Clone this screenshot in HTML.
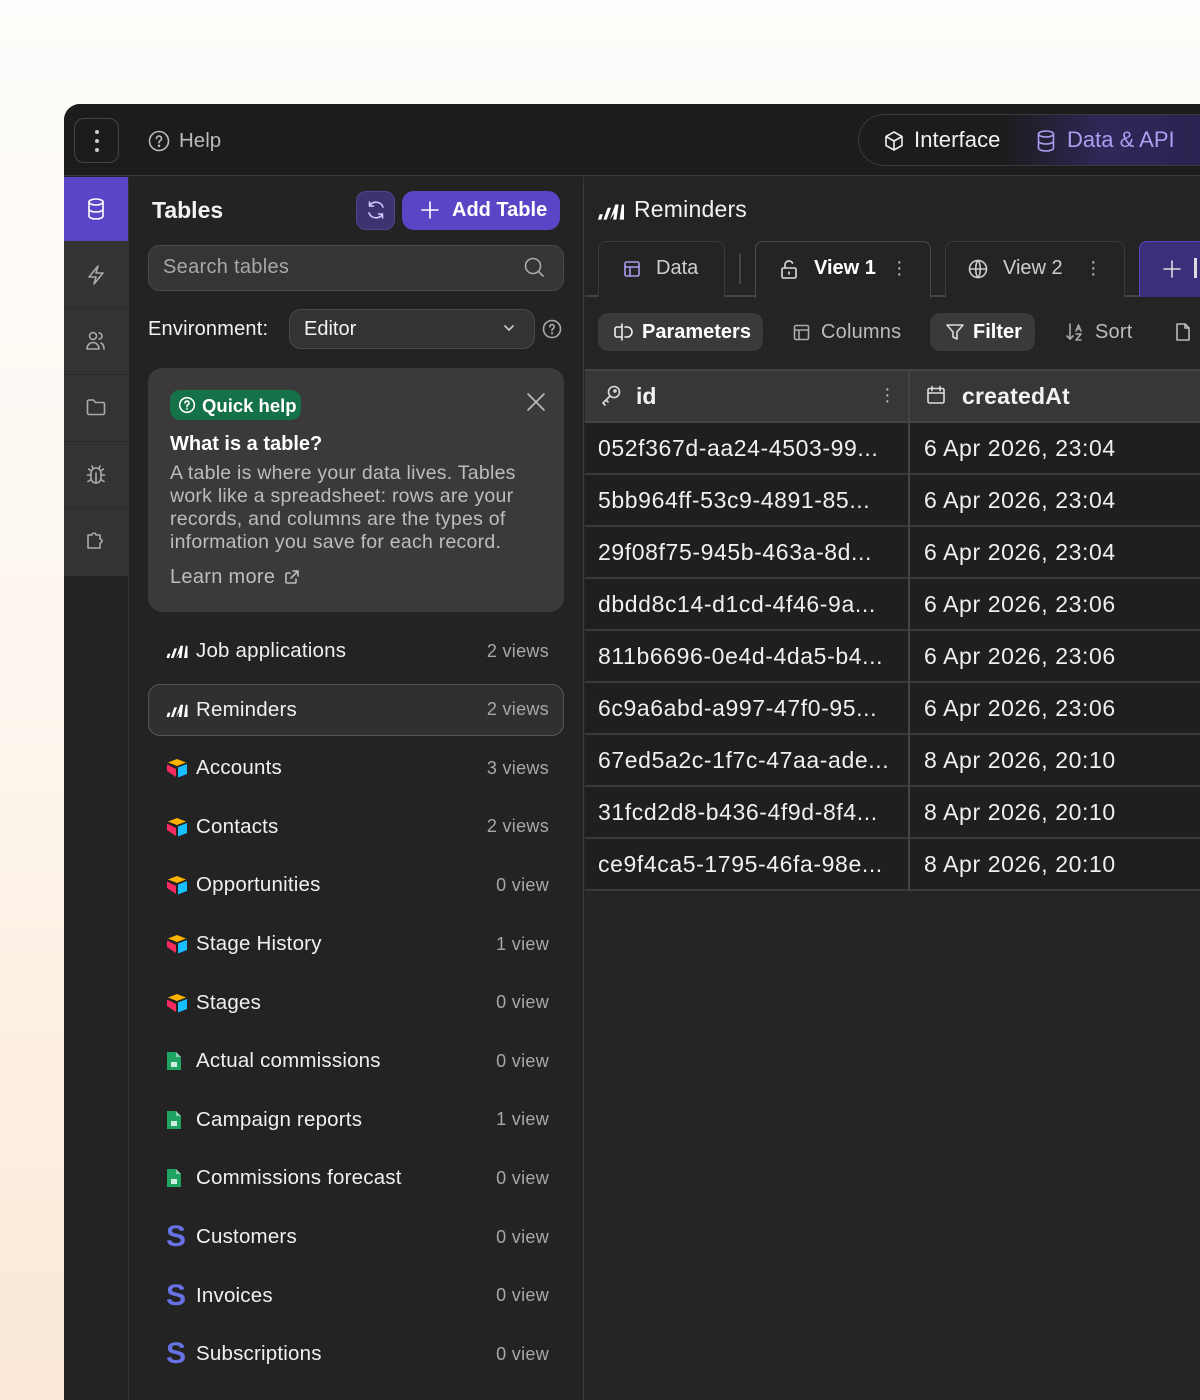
<!DOCTYPE html>
<html style="overflow:hidden;height:1400px"><head><meta charset="utf-8"><style>
*{box-sizing:border-box;margin:0;padding:0}
body{width:1200px;height:1400px;overflow:hidden;font-family:"Liberation Sans",sans-serif;background:linear-gradient(180deg,#fefdfb 0%,#fdf6ee 50%,#fbe8d6 100%);position:relative}
.a{position:absolute}
.win{left:64px;top:104px;width:1136px;height:1296px;background:#242424;border-top-left-radius:16px;overflow:hidden}
svg{fill:none;stroke:currentColor;stroke-width:1.6;stroke-linecap:round;stroke-linejoin:round}
.t{color:#f2f2f2}
.row{left:148px;width:416px;height:52px;display:flex;align-items:center;padding-left:18px;font-size:20.5px;letter-spacing:.2px;color:#f0f0f0}
.row .v{position:absolute;right:15px;color:#a8a8a8;font-size:18px;letter-spacing:.3px}
.row .ic{width:22px;margin-right:8px;display:flex;align-items:center}
.tr{left:521px;width:615px;height:52px;border-bottom:2px solid #3a3a3a;background:#1f1f1f;font-size:23px;letter-spacing:.6px;color:#f0f0f0}
.tr span{position:absolute;top:12px}
</style></head><body>
<div class="a win">
 <div class="a" style="left:0;top:0;width:1136px;height:72px;background:#1c1c1c;border-bottom:1px solid #3a3a3a"></div>
 <div class="a" style="left:10px;top:14px;width:45px;height:45px;border:1.5px solid #444;border-radius:10px;display:flex;flex-direction:column;align-items:center;justify-content:center;gap:5px">
  <i style="width:4px;height:4px;background:#ccc;border-radius:2px"></i><i style="width:4px;height:4px;background:#ccc;border-radius:2px"></i><i style="width:4px;height:4px;background:#ccc;border-radius:2px"></i></div>
 <svg class="a" style="left:84px;top:26px;color:#bbb" width="22" height="22" viewBox="0 0 22 22"><circle cx="11" cy="11" r="9.5"/><path d="M8.5 8.5a2.5 2.5 0 1 1 3.5 2.3c-.6.3-1 .8-1 1.5v.5"/><circle cx="11" cy="15.8" r=".5" fill="#bbb"/></svg>
 <div class="a" style="left:115px;top:25px;font-size:20.5px;color:#bbb">Help</div>
 <div class="a" style="left:794px;top:10px;width:360px;height:52px;border:1.5px solid #3a3a3a;border-right:none;border-radius:26px 0 0 26px;background:linear-gradient(90deg,#1c1c1c 0%,#1c1c1c 40%,#2f2758 68%,#2a2450 100%)"></div>
 <svg class="a" style="left:820px;top:26px;color:#eee" width="20" height="22" viewBox="0 0 20 22"><path d="M10 2l8 4.5v9L10 20l-8-4.5v-9z M2 6.5l8 4.5 8-4.5 M10 11v9"/></svg>
 <div class="a" style="left:850px;top:23px;font-size:22px;letter-spacing:.1px;color:#f2f2f2">Interface</div>
 <svg class="a" style="left:972px;top:25px;color:#a99ff0" width="20" height="24" viewBox="0 0 20 24"><ellipse cx="10" cy="5" rx="7.5" ry="3"/><path d="M2.5 5v14c0 1.7 3.4 3 7.5 3s7.5-1.3 7.5-3V5 M2.5 12c0 1.7 3.4 3 7.5 3s7.5-1.3 7.5-3"/></svg>
 <div class="a" style="left:1003px;top:23px;font-size:22px;color:#a99ff0">Data &amp; API</div>

 <div class="a" style="left:0;top:73px;width:64px;height:400px;background:#333"></div>
 <div class="a" style="left:0;top:472px;width:64px;height:824px;background:#222"></div>
 <div class="a" style="left:0;top:73px;width:64px;height:64px;background:#5b45c6"></div>
 <div class="a" style="left:0;top:204px;width:64px;height:1px;background:#2a2a2a"></div>
 <div class="a" style="left:0;top:270px;width:64px;height:1px;background:#2a2a2a"></div>
 <div class="a" style="left:0;top:337px;width:64px;height:1px;background:#2a2a2a"></div>
 <div class="a" style="left:0;top:404px;width:64px;height:1px;background:#2a2a2a"></div>
 <svg class="a" style="left:23px;top:94px;color:#fff" width="18" height="22" viewBox="0 0 18 22"><ellipse cx="9" cy="4" rx="7" ry="3"/><path d="M2 4v14c0 1.7 3 3 7 3s7-1.3 7-3V4 M2 11c0 1.7 3 3 7 3s7-1.3 7-3"/></svg>
 <svg class="a" style="left:22px;top:160px;color:#aaa" width="20" height="22" viewBox="0 0 20 22"><path d="M12 2L3 13h7l-2 7 9-11h-7z"/></svg>
 <svg class="a" style="left:21px;top:226px;color:#aaa" width="22" height="22" viewBox="0 0 22 22"><circle cx="8" cy="6" r="3.5"/><path d="M2 19c0-4 3-6.5 6-6.5s6 2.5 6 6.5z M14 3a3 3 0 0 1 0 6 M16 13c2 1 3 3 3 6"/></svg>
 <svg class="a" style="left:22px;top:294px;color:#aaa" width="20" height="18" viewBox="0 0 20 18"><path d="M1.5 3.5a1.5 1.5 0 0 1 1.5-1.5h4.5l2 2.5H17a1.5 1.5 0 0 1 1.5 1.5v9a1.5 1.5 0 0 1-1.5 1.5H3A1.5 1.5 0 0 1 1.5 15z"/></svg>
 <svg class="a" style="left:22px;top:360px;color:#aaa" width="20" height="22" viewBox="0 0 20 22"><path d="M5 9a5 5 0 0 1 10 0v5a5 5 0 0 1-10 0z M10 9v10 M5 11H1.5 M15 11h3.5 M5 15.5l-3 2 M15 15.5l3 2 M5.5 7l-3-2 M14.5 7l3-2 M7 4.5L6 2 M13 4.5l1-2.5"/></svg>
 <svg class="a" style="left:22px;top:426px;color:#aaa" width="20" height="20" viewBox="0 0 20 20"><path d="M2 5h4a2 2 0 1 1 4 0h4v4a2 2 0 1 1 0 4v5H2z"/></svg>

 <div class="a" style="left:64px;top:73px;width:456px;height:1223px;background:#232323;border-left:1px solid #303030;border-right:1.5px solid #3a3a3a"></div>
 <div class="a t" style="left:88px;top:93px;font-size:23px;font-weight:bold">Tables</div>
 <div class="a" style="left:292px;top:87px;width:39px;height:39px;border-radius:10px;background:#3c3370;border:1.5px solid #4f4590"></div>
 <svg class="a" style="left:301px;top:95px;color:#cfc9ff" width="22" height="22" viewBox="0 0 22 22"><path d="M18 8A7.5 7.5 0 0 0 4.5 7 M4 14a7.5 7.5 0 0 0 13.5 1 M4.5 3v4h4 M17.5 19v-4h-4"/></svg>
 <div class="a" style="left:338px;top:87px;width:158px;height:39px;border-radius:12px;background:#5b45c6"></div>
 <svg class="a" style="left:356px;top:96px;color:#fff" width="20" height="20" viewBox="0 0 20 20"><path d="M10 2v16 M2 10h16"/></svg>
 <div class="a" style="left:388px;top:95px;font-size:20px;color:#fff;font-weight:bold">Add Table</div>
 <div class="a" style="left:84px;top:141px;width:416px;height:46px;border:1.5px solid #4a4a4a;border-radius:12px;background:#353535"></div>
 <div class="a" style="left:99px;top:152px;font-size:20px;letter-spacing:.3px;color:#a8a8a8">Search tables</div>
 <svg class="a" style="left:459px;top:152px;color:#aaa" width="22" height="22" viewBox="0 0 22 22"><circle cx="10" cy="10" r="7.5"/><path d="M15.5 15.5L20 20"/></svg>
 <div class="a t" style="left:84px;top:214px;font-size:20px;letter-spacing:.2px">Environment:</div>
 <div class="a" style="left:225px;top:205px;width:246px;height:40px;border:1.5px solid #4a4a4a;border-radius:12px;background:#333"></div>
 <div class="a t" style="left:240px;top:214px;font-size:20px">Editor</div>
 <svg class="a" style="left:439px;top:219px;color:#ccc" width="12" height="10" viewBox="0 0 12 10"><path d="M2 3l4 4 4-4"/></svg>
 <svg class="a" style="left:478px;top:215px;color:#aaa" width="20" height="20" viewBox="0 0 20 20"><circle cx="10" cy="10" r="8.5"/><path d="M7.8 7.8a2.2 2.2 0 1 1 3 2c-.5.3-.8.7-.8 1.3v.4"/><circle cx="10" cy="14.2" r=".4"/></svg>

 <div class="a" style="left:84px;top:264px;width:416px;height:244px;background:#3a3a3a;border-radius:14px"></div>
 <div class="a" style="left:106px;top:286px;width:131px;height:30px;border-radius:10px;background:#157148"></div>
 <svg class="a" style="left:114px;top:292px;color:#fff" width="18" height="18" viewBox="0 0 18 18"><circle cx="9" cy="9" r="7.3"/><path d="M7 7a2 2 0 1 1 2.7 1.9c-.4.2-.7.6-.7 1.1v.3"/><circle cx="9" cy="12.6" r=".3"/></svg>
 <div class="a" style="left:138px;top:291px;font-size:18.5px;color:#fff;font-weight:bold">Quick help</div>
 <svg class="a" style="left:462px;top:288px;color:#bbb" width="20" height="20" viewBox="0 0 20 20"><path d="M2 2l16 16 M18 2L2 18"/></svg>
 <div class="a" style="left:106px;top:329px;font-size:20px;color:#fff;font-weight:bold">What is a table?</div>
 <div class="a" style="left:106px;top:358px;width:380px;font-size:19.5px;line-height:23px;letter-spacing:.25px;color:#bdbdbd">A table is where your data lives. Tables work like a spreadsheet: rows are your records, and columns are the types of information you save for each record.</div>
 <div class="a" style="left:106px;top:462px;font-size:20px;letter-spacing:.3px;color:#bdbdbd">Learn more</div>
 <svg class="a" style="left:220px;top:465px;color:#bdbdbd" width="16" height="16" viewBox="0 0 16 16"><path d="M9 2h5v5 M14 2L7 9 M12 10v3a1 1 0 0 1-1 1H3a1 1 0 0 1-1-1V5a1 1 0 0 1 1-1h3"/></svg>

 <div class="a" style="left:84px;top:580px;width:416px;height:52px;border:1.5px solid #555;border-radius:12px;background:#303030"></div>
 <div id="list"></div>

 <div class="a" style="left:534px;top:98px;color:#fff"><svg width="26" height="18" viewBox="0 0 24 16" style="fill:#fff;stroke:none"><path d="M0 16l1.5-5h3l-1.5 5z M5 16l4-11h3l-4 11z M11 16l5-14h3l-2 14h-3l1-6z M20 16l2-14h2v14z"/></svg></div>
 <div class="a t" style="left:570px;top:92px;font-size:23px;letter-spacing:.2px">Reminders</div>
 <div class="a" style="left:521px;top:191px;width:615px;height:1.5px;background:#444"></div>
 <div class="a" style="left:534px;top:137px;width:127px;height:56px;border:1.5px solid #3a3a3a;border-bottom:none;border-radius:8px 8px 0 0;background:#242424"></div>
 <svg class="a" style="left:559px;top:156px;color:#a99ff0" width="18" height="18" viewBox="0 0 18 18"><rect x="2" y="2" width="14" height="14" rx="1.5"/><path d="M2 7h14 M7 7v9"/></svg>
 <div class="a" style="left:592px;top:153px;font-size:20px;color:#cfcfcf">Data</div>
 <div class="a" style="left:675px;top:150px;width:1.5px;height:30px;background:#444"></div>
 <div class="a" style="left:691px;top:137px;width:176px;height:57px;border:1.5px solid #4a4a4a;border-bottom:none;border-radius:8px 8px 0 0;background:#242424"></div>
 <svg class="a" style="left:716px;top:155px;color:#ddd" width="18" height="20" viewBox="0 0 18 20"><rect x="2" y="9" width="14" height="10" rx="1.5"/><path d="M5 9V6a4 4 0 0 1 7.5-2 M9 13v2"/></svg>
 <div class="a" style="left:750px;top:153px;font-size:20px;color:#fff;font-weight:bold">View 1</div>
 <div class="a" style="left:832px;top:155px;font-size:20px;color:#bbb;line-height:6px">·<br>·<br>·</div>
 <div class="a" style="left:881px;top:137px;width:180px;height:56px;border:1.5px solid #3a3a3a;border-bottom:none;border-radius:8px 8px 0 0;background:#242424"></div>
 <svg class="a" style="left:904px;top:155px;color:#ccc" width="20" height="20" viewBox="0 0 20 20"><circle cx="10" cy="10" r="8.5"/><path d="M1.5 10h17 M10 1.5c-3 3-3 14 0 17 M10 1.5c3 3 3 14 0 17"/></svg>
 <div class="a" style="left:939px;top:153px;font-size:20px;color:#cfcfcf">View 2</div>
 <div class="a" style="left:1026px;top:155px;font-size:20px;color:#bbb;line-height:6px">·<br>·<br>·</div>
 <div class="a" style="left:1075px;top:137px;width:61px;height:56px;border:1.5px solid #5b45c6;border-bottom:none;border-right:none;border-radius:8px 0 0 0;background:#3a2f7a"></div>
 <svg class="a" style="left:1098px;top:155px;color:#ddd" width="20" height="20" viewBox="0 0 20 20"><path d="M10 2v16 M2 10h16"/></svg>
 <div class="a" style="left:1130px;top:154px;width:3px;height:20px;background:#ddd"></div>

 <div class="a" style="left:534px;top:209px;width:165px;height:38px;background:#3a3a3a;border-radius:10px"></div>
 <svg class="a" style="left:549px;top:218px;color:#eee" width="20" height="20" viewBox="0 0 20 20"><path d="M9 2v16 M9 5H4a2 2 0 0 0-2 2v6a2 2 0 0 0 2 2h5 M12 5h2a4 4 0 0 1 0 10h-2"/></svg>
 <div class="a" style="left:578px;top:217px;font-size:20px;color:#fff;font-weight:bold">Parameters</div>
 <svg class="a" style="left:729px;top:220px;color:#aaa" width="17" height="17" viewBox="0 0 17 17"><rect x="1.5" y="1.5" width="14" height="14" rx="1.5"/><path d="M1.5 6h14 M6 6v9.5"/></svg>
 <div class="a" style="left:757px;top:217px;font-size:20px;letter-spacing:.2px;color:#bbb">Columns</div>
 <div class="a" style="left:866px;top:209px;width:105px;height:38px;background:#3a3a3a;border-radius:10px"></div>
 <svg class="a" style="left:881px;top:218px;color:#ddd" width="20" height="20" viewBox="0 0 20 20"><path d="M2 3h16l-6 7v7l-4-2v-5z"/></svg>
 <div class="a" style="left:909px;top:217px;font-size:20px;color:#fff;font-weight:bold">Filter</div>
 <svg class="a" style="left:1001px;top:218px;color:#aaa" width="20" height="20" viewBox="0 0 20 20"><path d="M5 2v15 M2 14l3 3 3-3 M11 9l2.5-6 2.5 6 M12 7h3 M11 12h5l-5 6h5"/></svg>
 <div class="a" style="left:1031px;top:217px;font-size:20px;letter-spacing:.2px;color:#bbb">Sort</div>
 <svg class="a" style="left:1110px;top:218px;color:#bbb" width="18" height="20" viewBox="0 0 18 20"><path d="M3 2h8l4 4v12H3z M11 2v4h4"/></svg>

 <div class="a" style="left:521px;top:265px;width:615px;height:54px;background:#373737;border-top:2px solid #444;border-bottom:2px solid #444"></div>
 <svg class="a" style="left:536px;top:280px;color:#ddd" width="22" height="22" viewBox="0 0 22 22"><circle cx="14" cy="8" r="5.5"/><path d="M10 12l-7 7 2 2 M6 16l2 2"/><circle cx="15" cy="7" r="1"/></svg>
 <div class="a t" style="left:572px;top:279px;font-size:23px;font-weight:bold">id</div>
 <div class="a" style="left:820px;top:282px;font-size:20px;color:#bbb;line-height:6px">·<br>·<br>·</div>
 <svg class="a" style="left:862px;top:281px;color:#ddd" width="20" height="20" viewBox="0 0 20 20"><rect x="2" y="3.5" width="16" height="14.5" rx="1.5"/><path d="M2 8h16 M6 1.5v4 M14 1.5v4"/></svg>
 <div class="a t" style="left:898px;top:279px;font-size:23px;font-weight:bold;letter-spacing:.2px">createdAt</div>
 <div id="rows"></div>
 <div class="a" style="left:844px;top:265px;width:2px;height:522px;background:#444"></div>
</div>
<script>
var L=[["c","Job applications","2 views"],["c","Reminders","2 views"],["a","Accounts","3 views"],["a","Contacts","2 views"],["a","Opportunities","0 view"],["a","Stage History","1 view"],["a","Stages","0 view"],["g","Actual commissions","0 view"],["g","Campaign reports","1 view"],["g","Commissions forecast","0 view"],["s","Customers","0 view"],["s","Invoices","0 view"],["s","Subscriptions","0 view"]];
var I={c:'<svg width="22" height="14" viewBox="0 0 24 16" style="fill:#fff;stroke:none"><path d="M0 16l1.5-5h3l-1.5 5z M5 16l4-11h3l-4 11z M11 16l5-14h3l-2 14h-3l1-6z M20 16l2-14h2v14z"/></svg>',
a:'<svg width="22" height="20" viewBox="0 0 22 20" style="stroke:none"><path d="M11 1l9 3.5-9 3.5-9-3.5z" fill="#fcb400"/><path d="M12 9.5l9-3.5v10l-9 3.5z" fill="#18bfff"/><path d="M1 6.5l9 4.5v8L1 13z" fill="#f82b60"/></svg>',
g:'<svg width="16" height="20" viewBox="0 0 16 20" style="stroke:none"><path d="M1 1h9l5 5v13H1z" fill="#1ea362"/><path d="M10 1v5h5z" fill="#8ed1b1"/><rect x="5" y="11" width="6" height="5" fill="#fff" opacity=".8"/></svg>',
s:'<span style="font-size:30px;font-weight:bold;color:#6772e5;font-family:\'Liberation Sans\';line-height:20px">S</span>'};
var h='';L.forEach(function(r,i){var top=521+i*58.6;h+='<div class="a row" style="top:'+top+'px;left:84px"><span class="ic">'+I[r[0]]+'</span>'+r[1]+'<span class="v">'+r[2]+'</span></div>'});
document.getElementById('list').outerHTML=h;
var R=[["052f367d-aa24-4503-99...","6 Apr 2026, 23:04"],["5bb964ff-53c9-4891-85...","6 Apr 2026, 23:04"],["29f08f75-945b-463a-8d...","6 Apr 2026, 23:04"],["dbdd8c14-d1cd-4f46-9a...","6 Apr 2026, 23:06"],["811b6696-0e4d-4da5-b4...","6 Apr 2026, 23:06"],["6c9a6abd-a997-47f0-95...","6 Apr 2026, 23:06"],["67ed5a2c-1f7c-47aa-ade...","8 Apr 2026, 20:10"],["31fcd2d8-b436-4f9d-8f4...","8 Apr 2026, 20:10"],["ce9f4ca5-1795-46fa-98e...","8 Apr 2026, 20:10"]];
h='';R.forEach(function(r,i){h+='<div class="a tr" style="top:'+(319+i*52)+'px"><span style="left:13px">'+r[0]+'</span><span style="left:339px">'+r[1]+'</span></div>'});
document.getElementById('rows').outerHTML=h;
</script>
</body></html>
